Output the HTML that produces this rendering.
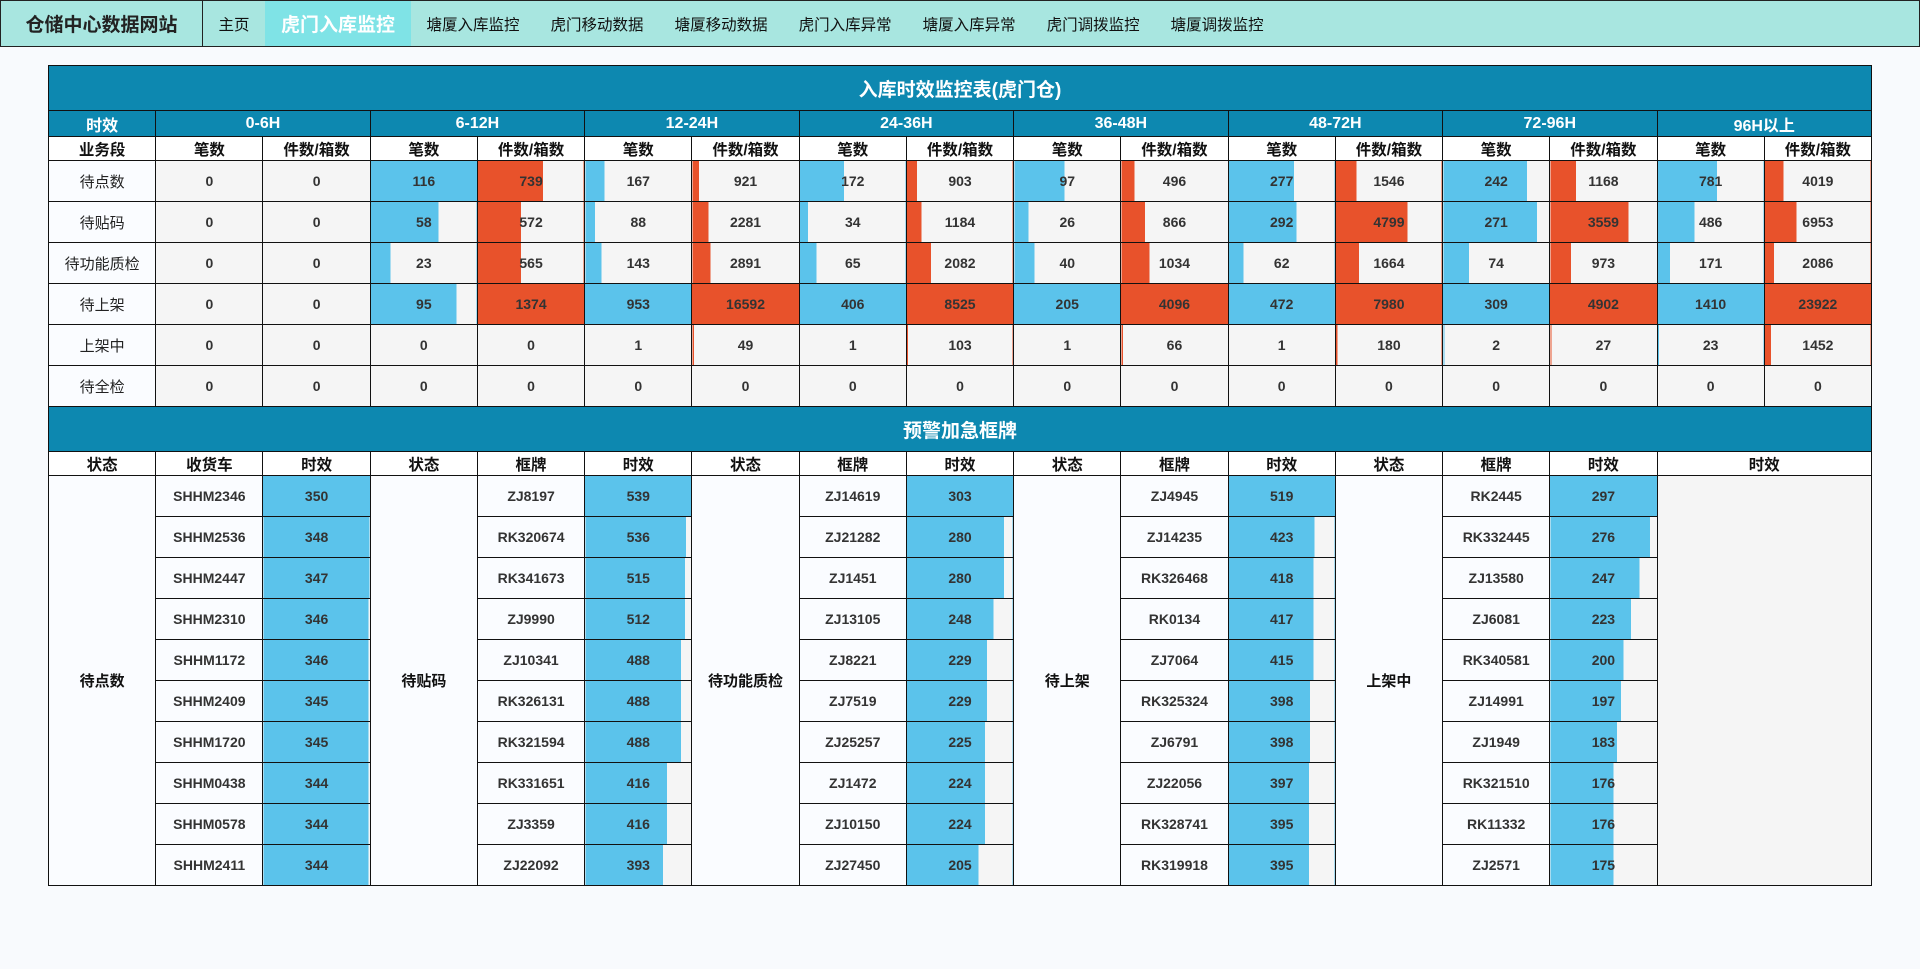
<!DOCTYPE html>
<html><head><meta charset="utf-8"><style>
*{box-sizing:border-box;margin:0;padding:0}
body{width:1920px;height:969px;background:#f8fafd;font-family:"Liberation Sans","Noto Sans CJK SC",sans-serif;overflow:hidden;color:#222}
.nav{position:absolute;left:0;top:0;width:1920px;height:47px;background:#a8e6e0;border:1px solid #222;display:flex;align-items:stretch}
.logo{width:202px;border-right:1px solid #222;font-size:19px;font-weight:bold;display:flex;align-items:center;justify-content:center}
.nav a{display:flex;align-items:center;padding:0 15.5px;font-size:15.5px;color:#111;text-decoration:none}
.nav a.on{background:#7fe3e6;color:#fff;font-size:19px;font-weight:bold;padding:0 16px}
table{position:absolute;left:48px;top:65px;width:1824px;border-collapse:collapse;table-layout:fixed}
td{border:1px solid #111;text-align:center;font-size:14px;font-weight:bold;color:#333;background:#f5f5f5;padding:0}
.t td{background:#0d88b0;color:#fff;font-size:19px;height:45px}
.h td{background:#0d88b0;color:#fff;font-size:16px;height:26px}
.s td{background:#fff;color:#111;font-size:15.5px;height:24px;font-weight:bold}
.r td{height:41px}
.r td.l{background:#fafcff;font-weight:normal;color:#222;font-size:15px}
.b td{height:41px}
.b td.w{background:#fafcff}
.b td.st{background:#fafcff;color:#111;font-size:15px}
</style></head><body>
<div class="nav"><div class="logo">仓储中心数据网站</div>
<a>主页</a><a class="on">虎门入库监控</a><a>塘厦入库监控</a><a>虎门移动数据</a><a>塘厦移动数据</a><a>虎门入库异常</a><a>塘厦入库异常</a><a>虎门调拨监控</a><a>塘厦调拨监控</a></div>
<table>
<colgroup><col span="17"></colgroup>
<tr class="t"><td colspan="17">入库时效监控表(虎门仓)</td></tr>
<tr class="h"><td>时效</td><td colspan="2">0-6H</td><td colspan="2">6-12H</td><td colspan="2">12-24H</td><td colspan="2">24-36H</td><td colspan="2">36-48H</td><td colspan="2">48-72H</td><td colspan="2">72-96H</td><td colspan="2">96H以上</td></tr>
<tr class="s"><td>业务段</td><td>笔数</td><td>件数/箱数</td><td>笔数</td><td>件数/箱数</td><td>笔数</td><td>件数/箱数</td><td>笔数</td><td>件数/箱数</td><td>笔数</td><td>件数/箱数</td><td>笔数</td><td>件数/箱数</td><td>笔数</td><td>件数/箱数</td><td>笔数</td><td>件数/箱数</td></tr>
<tr class="r"><td class="l">待点数</td><td>0</td><td>0</td>
<td style="background:linear-gradient(90deg,#5bc3eb 100%,#f5f5f5 100%)">116</td><td style="background:linear-gradient(90deg,#e8522b 62%,#f5f5f5 62%)">739</td>
<td style="background:linear-gradient(90deg,#5bc3eb 18%,#f5f5f5 18%)">167</td><td style="background:linear-gradient(90deg,#e8522b 6%,#f5f5f5 6%)">921</td>
<td style="background:linear-gradient(90deg,#5bc3eb 42%,#f5f5f5 42%)">172</td><td style="background:linear-gradient(90deg,#e8522b 10%,#f5f5f5 10%)">903</td>
<td style="background:linear-gradient(90deg,#5bc3eb 47%,#f5f5f5 47%)">97</td><td style="background:linear-gradient(90deg,#e8522b 12%,#f5f5f5 12%)">496</td>
<td style="background:linear-gradient(90deg,#5bc3eb 62%,#f5f5f5 62%)">277</td><td style="background:linear-gradient(90deg,#e8522b 20%,#f5f5f5 20%)">1546</td>
<td style="background:linear-gradient(90deg,#5bc3eb 79%,#f5f5f5 79%)">242</td><td style="background:linear-gradient(90deg,#e8522b 24%,#f5f5f5 24%)">1168</td>
<td style="background:linear-gradient(90deg,#5bc3eb 56%,#f5f5f5 56%)">781</td><td style="background:linear-gradient(90deg,#e8522b 18%,#f5f5f5 18%)">4019</td></tr>
<tr class="r"><td class="l">待贴码</td><td>0</td><td>0</td>
<td style="background:linear-gradient(90deg,#5bc3eb 64%,#f5f5f5 64%)">58</td><td style="background:linear-gradient(90deg,#e8522b 41%,#f5f5f5 41%)">572</td>
<td style="background:linear-gradient(90deg,#5bc3eb 9%,#f5f5f5 9%)">88</td><td style="background:linear-gradient(90deg,#e8522b 15%,#f5f5f5 15%)">2281</td>
<td style="background:linear-gradient(90deg,#5bc3eb 8%,#f5f5f5 8%)">34</td><td style="background:linear-gradient(90deg,#e8522b 14%,#f5f5f5 14%)">1184</td>
<td style="background:linear-gradient(90deg,#5bc3eb 13%,#f5f5f5 13%)">26</td><td style="background:linear-gradient(90deg,#e8522b 22%,#f5f5f5 22%)">866</td>
<td style="background:linear-gradient(90deg,#5bc3eb 64%,#f5f5f5 64%)">292</td><td style="background:linear-gradient(90deg,#e8522b 68%,#f5f5f5 68%)">4799</td>
<td style="background:linear-gradient(90deg,#5bc3eb 88%,#f5f5f5 88%)">271</td><td style="background:linear-gradient(90deg,#e8522b 73%,#f5f5f5 73%)">3559</td>
<td style="background:linear-gradient(90deg,#5bc3eb 35%,#f5f5f5 35%)">486</td><td style="background:linear-gradient(90deg,#e8522b 30%,#f5f5f5 30%)">6953</td></tr>
<tr class="r"><td class="l">待功能质检</td><td>0</td><td>0</td>
<td style="background:linear-gradient(90deg,#5bc3eb 19%,#f5f5f5 19%)">23</td><td style="background:linear-gradient(90deg,#e8522b 41%,#f5f5f5 41%)">565</td>
<td style="background:linear-gradient(90deg,#5bc3eb 15%,#f5f5f5 15%)">143</td><td style="background:linear-gradient(90deg,#e8522b 17%,#f5f5f5 17%)">2891</td>
<td style="background:linear-gradient(90deg,#5bc3eb 16%,#f5f5f5 16%)">65</td><td style="background:linear-gradient(90deg,#e8522b 23%,#f5f5f5 23%)">2082</td>
<td style="background:linear-gradient(90deg,#5bc3eb 19%,#f5f5f5 19%)">40</td><td style="background:linear-gradient(90deg,#e8522b 26%,#f5f5f5 26%)">1034</td>
<td style="background:linear-gradient(90deg,#5bc3eb 14%,#f5f5f5 14%)">62</td><td style="background:linear-gradient(90deg,#e8522b 22%,#f5f5f5 22%)">1664</td>
<td style="background:linear-gradient(90deg,#5bc3eb 24%,#f5f5f5 24%)">74</td><td style="background:linear-gradient(90deg,#e8522b 19%,#f5f5f5 19%)">973</td>
<td style="background:linear-gradient(90deg,#5bc3eb 12%,#f5f5f5 12%)">171</td><td style="background:linear-gradient(90deg,#e8522b 9%,#f5f5f5 9%)">2086</td></tr>
<tr class="r"><td class="l">待上架</td><td>0</td><td>0</td>
<td style="background:linear-gradient(90deg,#5bc3eb 81%,#f5f5f5 81%)">95</td><td style="background:#e8522b">1374</td>
<td style="background:#5bc3eb">953</td><td style="background:#e8522b">16592</td>
<td style="background:#5bc3eb">406</td><td style="background:#e8522b">8525</td>
<td style="background:#5bc3eb">205</td><td style="background:#e8522b">4096</td>
<td style="background:#5bc3eb">472</td><td style="background:#e8522b">7980</td>
<td style="background:#5bc3eb">309</td><td style="background:#e8522b">4902</td>
<td style="background:#5bc3eb">1410</td><td style="background:#e8522b">23922</td></tr>
<tr class="r"><td class="l">上架中</td><td>0</td><td>0</td><td>0</td><td>0</td>
<td>1</td><td style="background:linear-gradient(90deg,#e8522b 1.5%,#f5f5f5 1.5%)">49</td>
<td>1</td><td style="background:linear-gradient(90deg,#e8522b 1.5%,#f5f5f5 1.5%)">103</td>
<td>1</td><td style="background:linear-gradient(90deg,#e8522b 1.5%,#f5f5f5 1.5%)">66</td>
<td>1</td><td style="background:linear-gradient(90deg,#e8522b 2%,#f5f5f5 2%)">180</td>
<td style="background:linear-gradient(90deg,#5bc3eb 1%,#f5f5f5 1%)">2</td><td style="background:linear-gradient(90deg,#e8522b 1%,#f5f5f5 1%)">27</td>
<td style="background:linear-gradient(90deg,#5bc3eb 1.5%,#f5f5f5 1.5%)">23</td><td style="background:linear-gradient(90deg,#e8522b 6%,#f5f5f5 6%)">1452</td></tr>
<tr class="r"><td class="l">待全检</td><td>0</td><td>0</td><td>0</td><td>0</td><td>0</td><td>0</td><td>0</td><td>0</td><td>0</td><td>0</td><td>0</td><td>0</td><td>0</td><td>0</td><td>0</td><td>0</td></tr>
<tr class="t"><td colspan="17">预警加急框牌</td></tr>
<tr class="s"><td>状态</td><td>收货车</td><td>时效</td><td>状态</td><td>框牌</td><td>时效</td><td>状态</td><td>框牌</td><td>时效</td><td>状态</td><td>框牌</td><td>时效</td><td>状态</td><td>框牌</td><td>时效</td><td colspan="2">时效</td></tr>
<tr class="b"><td class="st" rowspan="10">待点数</td><td class="w">SHHM2346</td><td style="background:#5bc3eb">350</td><td class="st" rowspan="10">待贴码</td><td class="w">ZJ8197</td><td style="background:#5bc3eb">539</td><td class="st" rowspan="10">待功能质检</td><td class="w">ZJ14619</td><td style="background:#5bc3eb">303</td><td class="st" rowspan="10">待上架</td><td class="w">ZJ4945</td><td style="background:#5bc3eb">519</td><td class="st" rowspan="10">上架中</td><td class="w">RK2445</td><td style="background:#5bc3eb">297</td><td colspan="2" rowspan="10"></td></tr>
<tr class="b"><td class="w">SHHM2536</td><td style="background:linear-gradient(90deg,#5bc3eb 99%,#f5f5f5 99%)">348</td><td class="w">RK320674</td><td style="background:linear-gradient(90deg,#5bc3eb 95%,#f5f5f5 95%)">536</td><td class="w">ZJ21282</td><td style="background:linear-gradient(90deg,#5bc3eb 92%,#f5f5f5 92%)">280</td><td class="w">ZJ14235</td><td style="background:linear-gradient(90deg,#5bc3eb 81%,#f5f5f5 81%)">423</td><td class="w">RK332445</td><td style="background:linear-gradient(90deg,#5bc3eb 93%,#f5f5f5 93%)">276</td></tr>
<tr class="b"><td class="w">SHHM2447</td><td style="background:linear-gradient(90deg,#5bc3eb 99%,#f5f5f5 99%)">347</td><td class="w">RK341673</td><td style="background:linear-gradient(90deg,#5bc3eb 94%,#f5f5f5 94%)">515</td><td class="w">ZJ1451</td><td style="background:linear-gradient(90deg,#5bc3eb 92%,#f5f5f5 92%)">280</td><td class="w">RK326468</td><td style="background:linear-gradient(90deg,#5bc3eb 80%,#f5f5f5 80%)">418</td><td class="w">ZJ13580</td><td style="background:linear-gradient(90deg,#5bc3eb 83%,#f5f5f5 83%)">247</td></tr>
<tr class="b"><td class="w">SHHM2310</td><td style="background:linear-gradient(90deg,#5bc3eb 98%,#f5f5f5 98%)">346</td><td class="w">ZJ9990</td><td style="background:linear-gradient(90deg,#5bc3eb 94%,#f5f5f5 94%)">512</td><td class="w">ZJ13105</td><td style="background:linear-gradient(90deg,#5bc3eb 82%,#f5f5f5 82%)">248</td><td class="w">RK0134</td><td style="background:linear-gradient(90deg,#5bc3eb 80%,#f5f5f5 80%)">417</td><td class="w">ZJ6081</td><td style="background:linear-gradient(90deg,#5bc3eb 75%,#f5f5f5 75%)">223</td></tr>
<tr class="b"><td class="w">SHHM1172</td><td style="background:linear-gradient(90deg,#5bc3eb 98%,#f5f5f5 98%)">346</td><td class="w">ZJ10341</td><td style="background:linear-gradient(90deg,#5bc3eb 90%,#f5f5f5 90%)">488</td><td class="w">ZJ8221</td><td style="background:linear-gradient(90deg,#5bc3eb 76%,#f5f5f5 76%)">229</td><td class="w">ZJ7064</td><td style="background:linear-gradient(90deg,#5bc3eb 80%,#f5f5f5 80%)">415</td><td class="w">RK340581</td><td style="background:linear-gradient(90deg,#5bc3eb 68%,#f5f5f5 68%)">200</td></tr>
<tr class="b"><td class="w">SHHM2409</td><td style="background:linear-gradient(90deg,#5bc3eb 98%,#f5f5f5 98%)">345</td><td class="w">RK326131</td><td style="background:linear-gradient(90deg,#5bc3eb 90%,#f5f5f5 90%)">488</td><td class="w">ZJ7519</td><td style="background:linear-gradient(90deg,#5bc3eb 76%,#f5f5f5 76%)">229</td><td class="w">RK325324</td><td style="background:linear-gradient(90deg,#5bc3eb 77%,#f5f5f5 77%)">398</td><td class="w">ZJ14991</td><td style="background:linear-gradient(90deg,#5bc3eb 66%,#f5f5f5 66%)">197</td></tr>
<tr class="b"><td class="w">SHHM1720</td><td style="background:linear-gradient(90deg,#5bc3eb 98%,#f5f5f5 98%)">345</td><td class="w">RK321594</td><td style="background:linear-gradient(90deg,#5bc3eb 90%,#f5f5f5 90%)">488</td><td class="w">ZJ25257</td><td style="background:linear-gradient(90deg,#5bc3eb 74%,#f5f5f5 74%)">225</td><td class="w">ZJ6791</td><td style="background:linear-gradient(90deg,#5bc3eb 77%,#f5f5f5 77%)">398</td><td class="w">ZJ1949</td><td style="background:linear-gradient(90deg,#5bc3eb 62%,#f5f5f5 62%)">183</td></tr>
<tr class="b"><td class="w">SHHM0438</td><td style="background:linear-gradient(90deg,#5bc3eb 98%,#f5f5f5 98%)">344</td><td class="w">RK331651</td><td style="background:linear-gradient(90deg,#5bc3eb 77%,#f5f5f5 77%)">416</td><td class="w">ZJ1472</td><td style="background:linear-gradient(90deg,#5bc3eb 74%,#f5f5f5 74%)">224</td><td class="w">ZJ22056</td><td style="background:linear-gradient(90deg,#5bc3eb 76%,#f5f5f5 76%)">397</td><td class="w">RK321510</td><td style="background:linear-gradient(90deg,#5bc3eb 59%,#f5f5f5 59%)">176</td></tr>
<tr class="b"><td class="w">SHHM0578</td><td style="background:linear-gradient(90deg,#5bc3eb 98%,#f5f5f5 98%)">344</td><td class="w">ZJ3359</td><td style="background:linear-gradient(90deg,#5bc3eb 77%,#f5f5f5 77%)">416</td><td class="w">ZJ10150</td><td style="background:linear-gradient(90deg,#5bc3eb 74%,#f5f5f5 74%)">224</td><td class="w">RK328741</td><td style="background:linear-gradient(90deg,#5bc3eb 76%,#f5f5f5 76%)">395</td><td class="w">RK11332</td><td style="background:linear-gradient(90deg,#5bc3eb 59%,#f5f5f5 59%)">176</td></tr>
<tr class="b"><td class="w">SHHM2411</td><td style="background:linear-gradient(90deg,#5bc3eb 98%,#f5f5f5 98%)">344</td><td class="w">ZJ22092</td><td style="background:linear-gradient(90deg,#5bc3eb 73%,#f5f5f5 73%)">393</td><td class="w">ZJ27450</td><td style="background:linear-gradient(90deg,#5bc3eb 68%,#f5f5f5 68%)">205</td><td class="w">RK319918</td><td style="background:linear-gradient(90deg,#5bc3eb 76%,#f5f5f5 76%)">395</td><td class="w">ZJ2571</td><td style="background:linear-gradient(90deg,#5bc3eb 59%,#f5f5f5 59%)">175</td></tr>
</table>
</body></html>
